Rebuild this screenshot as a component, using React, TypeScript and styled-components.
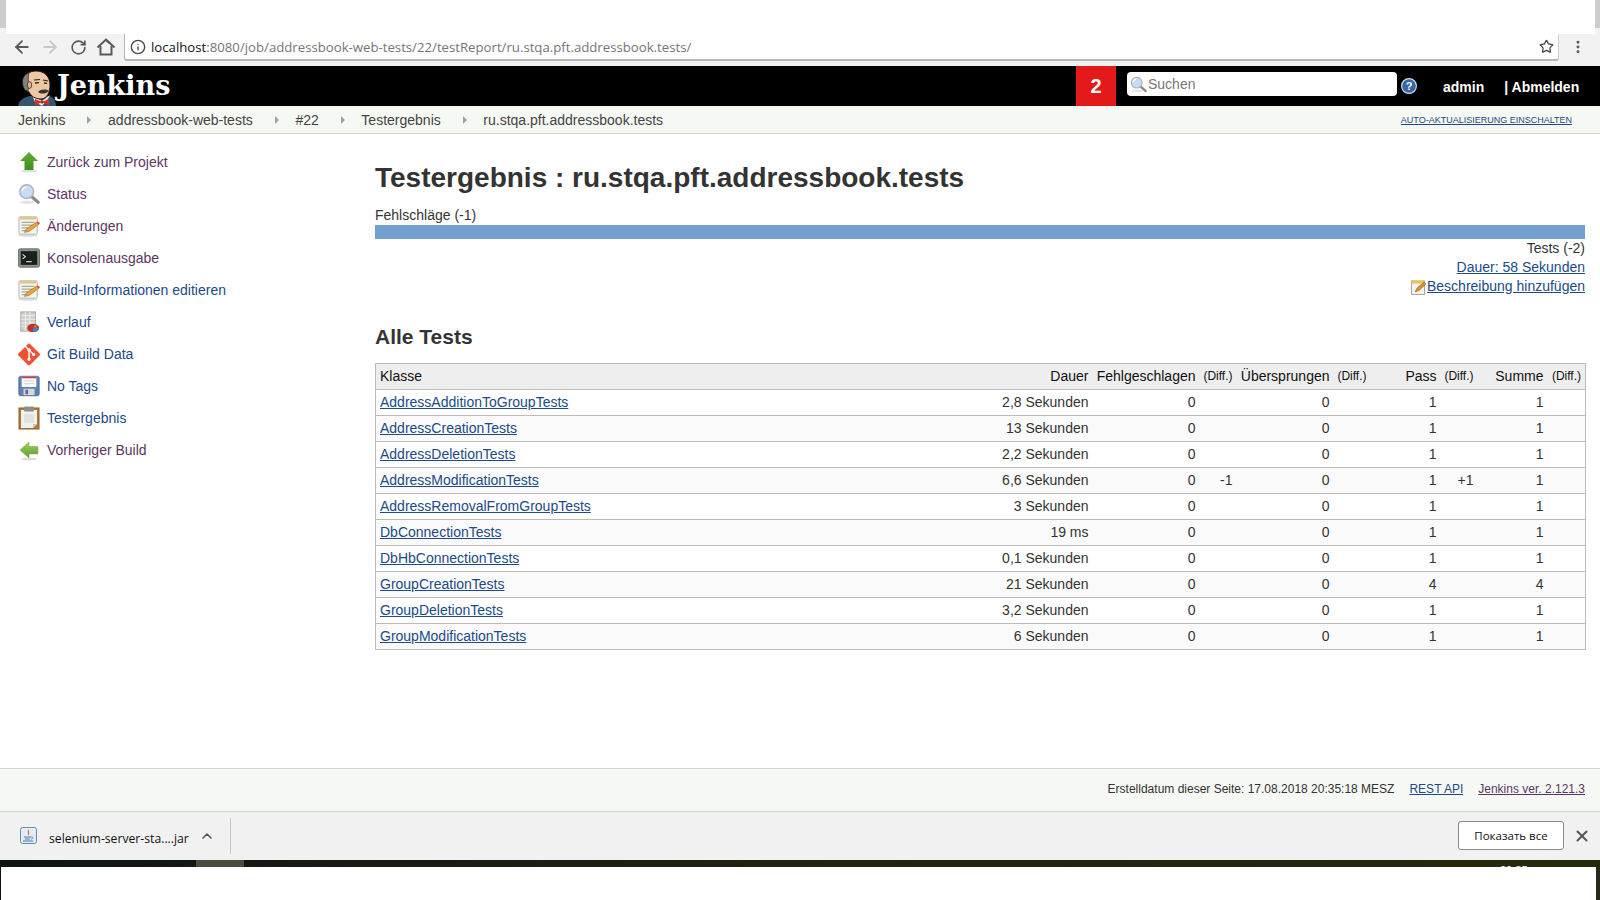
import React from "react";
import styled, { createGlobalStyle } from "styled-components";
import { ArrowLeft, ArrowRight, ChevronUp, Info, MoreVertical, RotateCw, Star, X } from "lucide-react";
import { SiGit } from "react-icons/si";

const GlobalStyle = createGlobalStyle`
  html, body { margin: 0; padding: 0; background: #fff; }
  body { font-family: "Liberation Sans", Arial, sans-serif; font-size: 14px; color: #333; }
  * { box-sizing: border-box; }
`;

const Page = styled.div`
  width: 1600px;
  height: 900px;
  display: flex;
  flex-direction: column;
  overflow: hidden;
`;

const TitleStrip = styled.div`
  height: 34px;
  flex: none;
  display: flex;
  justify-content: space-between;
  background: #fff;
`;

const StripEdge = styled.div<{ $w: number }>`
  width: ${({ $w }) => $w}px;
  background: linear-gradient(#cdcdcd 0, #cdcdcd 28px, #f2f2f2 28px);
`;

const Toolbar = styled.div`
  height: 32px;
  flex: none;
  display: flex;
  align-items: flex-start;
  background: #f2f2f2;
`;

const NavButton = styled.span<{ $off?: boolean }>`
  width: 28px;
  height: 26px;
  flex: none;
  display: flex;
  align-items: center;
  justify-content: center;
  color: ${({ $off }) => ($off ? "#c9c9c9" : "#5a5a5a")};
`;

const NavGroup = styled.div`
  width: 124px;
  flex: none;
  display: flex;
  padding-left: 8px;
`;

const AddressBar = styled.div`
  width: 1435px;
  height: 27px;
  flex: none;
  display: flex;
  align-items: center;
  gap: 5px;
  padding: 0 4px 0 5px;
  background: #fff;
  border-left: 1px solid #b5b5b5;
  border-right: 1px solid #d0d0d0;
  border-bottom: 2px solid #b5b5b5;
  border-radius: 0 0 3px 3px;
  font-family: "Open Sans", sans-serif;
  font-size: 13.2px;
  color: #757575;
`;

const Host = styled.span`
  color: #111;
`;

const Url = styled.span`
  flex: 1;
  white-space: nowrap;
`;

const Menu = styled.span`
  width: 37px;
  height: 26px;
  display: flex;
  align-items: center;
  justify-content: center;
  color: #5a5a5a;
`;

const Header = styled.header`
  height: 40px;
  flex: none;
  display: flex;
  align-items: stretch;
  background: #000;
`;

const Brand = styled.div`
  width: 1076px;
  display: flex;
  align-items: flex-end;
  padding-left: 18px;
  gap: 1px;
`;

const BrandName = styled.span`
  font-family: "DejaVu Serif", "Liberation Serif", serif;
  font-weight: bold;
  font-size: 27px;
  line-height: 36px;
  height: 38px;
  color: #fff;
`;

const Badge = styled.div`
  width: 40px;
  display: flex;
  align-items: center;
  justify-content: center;
  background: #e41a1a;
  color: #fff;
  font-weight: bold;
  font-size: 20px;
`;

const SearchBox = styled.div`
  width: 270px;
  height: 24px;
  margin: 6px 0 0 11px;
  display: flex;
  align-items: center;
  gap: 1px;
  padding-left: 3px;
  background: #fff;
  border-radius: 4px;
  font-size: 14px;
  color: #777;
`;

const HeaderHelp = styled.span`
  margin: 12px 0 0 4px;
  height: 16px;
`;

const HeaderLink = styled.span<{ $left: number }>`
  margin-left: ${({ $left }) => $left}px;
  align-self: center;
  padding-top: 1px;
  color: #fff;
  font-weight: bold;
  font-size: 14px;
`;

const Crumbs = styled.nav`
  height: 28px;
  flex: none;
  display: flex;
  align-items: center;
  padding: 0 28px 0 18px;
  background: #f6f8f3;
  border-bottom: 1px solid #d3d7cf;
  color: #444;
`;

const Crumb = styled.span`
  white-space: nowrap;
`;

const CrumbArrow = styled.span`
  width: 0;
  height: 0;
  margin: 0 16.6px 0 22px;
  border-left: 4px solid #a0a0a0;
  border-top: 4px solid transparent;
  border-bottom: 4px solid transparent;
`;

const AutoRefresh = styled.a`
  margin-left: auto;
  font-size: 9px;
  color: #204a87;
  text-decoration: underline;
`;

const Body = styled.div`
  height: 634px;
  flex: none;
  display: flex;
`;

const Side = styled.aside`
  width: 375px;
  flex: none;
  padding: 12px 0 0 18px;
`;

const SideItem = styled.a<{ $visited?: boolean }>`
  height: 32px;
  display: flex;
  align-items: center;
  gap: 7px;
  color: ${({ $visited }) => ($visited ? "#5c3566" : "#204a87")};
`;

const SideIcon = styled.span`
  width: 22px;
  height: 24px;
  flex: none;
  display: flex;
  align-items: center;
  justify-content: center;
`;

const Main = styled.main`
  width: 1210px;
  flex: none;
`;

const Title = styled.h1`
  margin: 25px 0 0;
  font-size: 28px;
  line-height: 38px;
  font-weight: bold;
  color: #333;
`;

const BarLabel = styled.div`
  margin-top: 9px;
  line-height: 18px;
`;

const Bar = styled.div`
  height: 14px;
  margin-top: 1px;
  background: #729fcf;
`;

const Summary = styled.div`
  display: flex;
  flex-direction: column;
  align-items: flex-end;
  line-height: 19px;
`;

const SummaryLine = styled.div`
  display: flex;
  align-items: center;
`;

const TextLink = styled.a<{ $visited?: boolean }>`
  color: ${({ $visited }) => ($visited ? "#5c3566" : "#204a87")};
  text-decoration: underline;
`;

const SubTitle = styled.h2`
  margin: 27px 0 0;
  font-size: 21px;
  line-height: 28px;
  font-weight: bold;
  color: #333;
`;

const Table = styled.table`
  width: 1210px;
  margin-top: 12px;
  table-layout: fixed;
  border-collapse: collapse;
  border: 1px solid #bbb;
`;

const HeadRow = styled.tr`
  height: 26px;
  background: #eee;
  color: #111;
`;

const Row = styled.tr<{ $odd: boolean }>`
  height: 26px;
  background: ${({ $odd }) => ($odd ? "#fafafa" : "#fff")};
  border-top: 1px solid #bbb;
`;

const Cell = styled.td<{ $right?: boolean }>`
  padding: 0 4px 2px;
  white-space: nowrap;
  font-weight: normal;
  text-align: ${({ $right }) => ($right ? "right" : "left")};
`;

const HeadCell = styled(Cell).attrs({ as: "th" })``;

const DiffHead = styled(HeadCell)`
  font-size: 12px;
  padding-left: 0;
`;

const Footer = styled.footer`
  height: 44px;
  flex: none;
  display: flex;
  align-items: center;
  justify-content: flex-end;
  gap: 15px;
  padding: 0 15px 2px 0;
  background: #f6f8f3;
  border-top: 1px solid #d3d7cf;
  border-bottom: 1px solid #d3d7cf;
  font-size: 12px;
`;

const DownloadBar = styled.div`
  height: 48px;
  flex: none;
  display: flex;
  align-items: center;
  padding: 0 5px 1px 0;
  background: #f1f1f1;
  font-family: "Open Sans", sans-serif;
`;

const DownloadItem = styled.div`
  width: 231px;
  height: 36px;
  flex: none;
  display: flex;
  align-items: center;
  padding-left: 20px;
  border-right: 1px solid #c8c8c8;
  color: #111;
  font-size: 12.2px;
`;

const FileName = styled.span`
  margin: 6px 10px 0 12px;
  white-space: nowrap;
`;

const ShowAll = styled.button`
  width: 106px;
  height: 29px;
  margin-left: auto;
  background: #fff;
  border: 1px solid #8a8a8a;
  border-radius: 3px;
  font-family: "Open Sans", sans-serif;
  font-size: 11.5px;
  color: #111;
`;

const CloseButton = styled.span`
  width: 26px;
  margin-left: 5px;
  display: flex;
  justify-content: center;
  color: #555;
`;

const Desktop = styled.div`
  height: 7px;
  flex: none;
  position: relative;
  overflow: hidden;
  background: linear-gradient(90deg, #0d1514, #1e2210 45%, #272a0b);
`;

const DesktopTab = styled.div`
  position: absolute;
  left: 196px;
  top: 0;
  width: 48px;
  height: 7px;
  background: #4a4d3c;
`;

const DesktopClock = styled.span`
  position: absolute;
  left: 1500px;
  top: 4px;
  color: #fff;
  font-size: 11px;
  line-height: 12px;
`;

const Below = styled.div`
  flex: 1;
  background: #fff;
  border-left: 1px solid #111;
  border-right: 4px solid #2a2a1c;
`;

const HomeIcon = () => (
  <svg width="20" height="20" viewBox="0 0 20 20" fill="none" stroke="currentColor" strokeWidth="2">
    <path d="M1.5 10.5 L10 2.5 L18.5 10.5" strokeLinejoin="miter" />
    <path d="M4.5 9 V17.5 H15.5 V9" />
    <path d="M10 3 L14 6.5" />
  </svg>
);

const ArrowIcon = ({ left, colors }: { left?: boolean; colors: [string, string] }) => (
  <svg width="22" height="22" viewBox="0 0 22 22">
    <defs>
      <linearGradient id={left ? "arrL" : "arrU"} x1="0" y1="0" x2="0" y2="1">
        <stop offset="0" stopColor={colors[0]} />
        <stop offset="1" stopColor={colors[1]} />
      </linearGradient>
    </defs>
    <ellipse cx="11" cy="20" rx="8" ry="1.5" fill="#ddd" />
    {left ? (
      <path d="M2 11 L11 3 V7.5 H20 V15 H11 V19 Z" fill="url(#arrL)" stroke="#7aa84a" strokeWidth=".5" />
    ) : (
      <path d="M11 1 L20 10 H15.5 V19 H6.5 V10 H2 Z" fill="url(#arrU)" />
    )}
  </svg>
);

const LensIcon = ({ size = 24 }: { size?: number }) => (
  <svg width={size} height={size} viewBox="0 0 24 24">
    <ellipse cx="10" cy="21" rx="8" ry="2" fill="#e6e6e6" />
    <path d="M15 15 L22 21" stroke="#8a8a8a" strokeWidth="3.4" strokeLinecap="round" />
    <circle cx="9.5" cy="9.5" r="7.5" fill="#c7dcf3" stroke="#a9b4bf" strokeWidth="1.6" />
    <path d="M4.5 9 A5 5 0 0 1 9 4.5" stroke="#fff" strokeWidth="1.6" fill="none" />
  </svg>
);

const NoteIcon = () => (
  <svg width="24" height="24" viewBox="0 0 24 24">
    <ellipse cx="11" cy="22.5" rx="10" ry="1.2" fill="#ddd" />
    <rect x="1" y="2" width="20" height="19" rx="1" fill="#f3f3ee" stroke="#b5b5ad" />
    <rect x="2" y="2" width="18" height="3" fill="#d9c98b" />
    <path d="M4 8 H18 M4 11 H16 M4 14 H11 M4 17 H9" stroke="#a9a9a5" strokeWidth="1.2" />
    <path d="M7 19 L9 15 L20 8 L23 10 L12 18 Z" fill="#e8a33b" stroke="#a06a1d" strokeWidth=".6" />
    <path d="M20 8 L23 10 L24 8.6 L21.5 7 Z" fill="#d9403a" />
  </svg>
);

const ConsoleIcon = () => (
  <svg width="24" height="24" viewBox="0 0 24 24">
    <rect x="0.5" y="2" width="23" height="20" rx="2" fill="#8e928a" stroke="#666" />
    <rect x="3" y="4.5" width="18" height="15" fill="#18221c" />
    <path d="M5 8 L8 10.5 L5 13" stroke="#dfe8df" strokeWidth="1.2" fill="none" />
    <path d="M9 16 H15" stroke="#dfe8df" strokeWidth="1.2" />
  </svg>
);

const HistoryIcon = () => (
  <svg width="24" height="24" viewBox="0 0 24 24">
    <rect x="3" y="1" width="16" height="21" fill="#cfcfca" stroke="#a5a5a0" />
    <path d="M3 5 H19 M3 9 H19 M3 13 H19 M3 17 H19 M8 1 V22 M13 1 V22" stroke="#efefec" strokeWidth="1" />
    <ellipse cx="16.5" cy="18.5" rx="6.5" ry="4.5" fill="#c62d2a" />
    <path d="M16.5 18.5 L23 18.5 A6.5 4.5 0 0 1 16 23 Z" fill="#4b7fb5" />
    <path d="M16.5 18 L19.5 14.5 L21 18 Z" fill="#7aa84a" />
  </svg>
);

const FloppyIcon = () => (
  <svg width="24" height="24" viewBox="0 0 24 24">
    <rect x="0" y="0" width="24" height="24" fill="#f2f2f2" />
    <rect x="1" y="1.5" width="22" height="21" rx="2" fill="#5f82b4" stroke="#456a9c" />
    <rect x="4" y="2" width="16" height="11" fill="#fff" />
    <rect x="4" y="2" width="16" height="1.6" fill="#d63a35" />
    <path d="M6 6.5 H18 M6 9.5 H18" stroke="#c9c9c9" />
    <rect x="6" y="15" width="12" height="7" fill="#d9d9d9" />
    <rect x="8" y="16" width="3" height="5" fill="#5a6f8f" />
  </svg>
);

const ClipboardIcon = () => (
  <svg width="22" height="24" viewBox="0 0 22 24">
    <rect x="1" y="2" width="20" height="21" fill="#b17a35" stroke="#8c5f26" />
    <path d="M3 4 H19 V18 L15 22 H3 Z" fill="#f1f1ee" />
    <path d="M15 22 L19 18 H15 Z" fill="#c8c8c4" />
    <path d="M6 8 H16 V17 H6 Z" fill="#e2e2de" />
    <rect x="6" y="0.5" width="10" height="5" rx="1" fill="#8e8e8a" />
  </svg>
);

const SmallNote = () => (
  <svg width="16" height="16" viewBox="0 0 16 16">
    <rect x="0.5" y="2" width="13" height="13.5" fill="#f4f4ee" stroke="#a8a8a0" />
    <rect x="1" y="1.5" width="12" height="3" fill="#e2c65a" />
    <path d="M4 13 L6 9 L13 3 L15 5 L8 11.5 Z" fill="#d98f2b" stroke="#8d5a19" strokeWidth=".5" />
  </svg>
);

const JavaFile = () => (
  <svg width="17" height="17" viewBox="0 0 17 17">
    <rect x="0.5" y="0.5" width="16" height="16" rx="2" fill="#e3ecf6" stroke="#6f8aa6" />
    <path d="M9 3 C7 5 10 6 8 8" stroke="#e0702a" strokeWidth="1.2" fill="none" />
    <path d="M4 10 H11 M5 12 H10 M3 14 H13" stroke="#4d7ca8" strokeWidth="1" />
    <path d="M11 10 C13.5 9.5 13.5 12 11 12" stroke="#4d7ca8" strokeWidth=".8" fill="none" />
  </svg>
);

const HelpIcon = () => (
  <svg width="16" height="16" viewBox="0 0 16 16">
    <circle cx="8" cy="8" r="7.4" fill="#3566a8" stroke="#cfd9e8" strokeWidth="1.2" />
    <text x="8" y="12" textAnchor="middle" fontSize="11" fontWeight="bold" fontFamily="Liberation Sans" fill="#fff">?</text>
  </svg>
);

const Butler = () => (
  <svg width="38" height="38" viewBox="0 0 38 38">
    <path d="M0 38 C1 32 6 29 12 28 L32 28 C36 30 38 34 38 38 Z" fill="#33566f" />
    <path d="M14 27 L24 33 L32 27 L30 31 L24 38 L17 34 Z" fill="#ece9e1" />
    <path d="M6 14 C6 6 12 3 18 3 C27 3 32 9 32 17 C32 24 29 31 23 31 C17 31 13 28 11 24 C8 23 6 19 6 14 Z" fill="#eec7a4" stroke="#231c18" strokeWidth="1" />
    <path d="M5 18 C3 10 7 6 11 5 C10 9 10 13 11 17 L10 23 C7 23 6 21 5 18 Z" fill="#7f7f7b" stroke="#231c18" strokeWidth=".6" />
    <ellipse cx="11.5" cy="17" rx="2.2" ry="3.4" fill="#e3b28e" stroke="#231c18" strokeWidth=".7" />
    <path d="M16 12 L22 11.5 M25 12 L30 13" stroke="#2c2420" strokeWidth="1.2" />
    <path d="M17 15 L21 14.6 M26 15 L29 15.4" stroke="#2c2420" strokeWidth="1.4" />
    <path d="M20 24 C23 21 28 21 31 23 C28 26 23 26.5 20 24 Z" fill="#3a3430" />
    <path d="M17 31 L24 34 L17 37.5 Z M31 31 L24 34 L31 37.5 Z" fill="#dc2a2d" />
    <circle cx="24" cy="34" r="1.5" fill="#b21b20" />
  </svg>
);

type NavEntry = { label: string; icon: React.ReactNode; visited?: boolean };

const navEntries: NavEntry[] = [
  { label: "Zurück zum Projekt", icon: <ArrowIcon colors={["#5fae2f", "#3f8f1f"]} />, visited: true },
  { label: "Status", icon: <LensIcon />, visited: true },
  { label: "Änderungen", icon: <NoteIcon />, visited: true },
  { label: "Konsolenausgabe", icon: <ConsoleIcon />, visited: true },
  { label: "Build-Informationen editieren", icon: <NoteIcon /> },
  { label: "Verlauf", icon: <HistoryIcon /> },
  { label: "Git Build Data", icon: <SiGit size={27} color="#f05033" /> },
  { label: "No Tags", icon: <FloppyIcon /> },
  { label: "Testergebnis", icon: <ClipboardIcon /> },
  { label: "Vorheriger Build", icon: <ArrowIcon left colors={["#9ccc5f", "#5f9f2f"]} />, visited: true },
];

type TestRow = {
  name: string;
  duration: string;
  pass: number;
  failDiff?: string;
  passDiff?: string;
};

const testRows: TestRow[] = [
  { name: "AddressAdditionToGroupTests", duration: "2,8 Sekunden", pass: 1 },
  { name: "AddressCreationTests", duration: "13 Sekunden", pass: 1 },
  { name: "AddressDeletionTests", duration: "2,2 Sekunden", pass: 1 },
  { name: "AddressModificationTests", duration: "6,6 Sekunden", pass: 1, failDiff: "-1", passDiff: "+1" },
  { name: "AddressRemovalFromGroupTests", duration: "3 Sekunden", pass: 1 },
  { name: "DbConnectionTests", duration: "19 ms", pass: 1 },
  { name: "DbHbConnectionTests", duration: "0,1 Sekunden", pass: 1 },
  { name: "GroupCreationTests", duration: "21 Sekunden", pass: 4 },
  { name: "GroupDeletionTests", duration: "3,2 Sekunden", pass: 1 },
  { name: "GroupModificationTests", duration: "6 Sekunden", pass: 1 },
];

const columnWidths = [605, 112, 107, 37, 97, 37, 70, 37, 70, 38];
const crumbs = ["Jenkins", "addressbook-web-tests", "#22", "Testergebnis", "ru.stqa.pft.addressbook.tests"];

export default function App() {
  return (
    <Page>
      <GlobalStyle />
      <TitleStrip>
        <StripEdge $w={6} />
        <StripEdge $w={5} />
      </TitleStrip>
      <Toolbar>
        <NavGroup>
          <NavButton><ArrowLeft size={20} strokeWidth={2.2} /></NavButton>
          <NavButton $off><ArrowRight size={20} strokeWidth={2.2} /></NavButton>
          <NavButton><RotateCw size={17} strokeWidth={2.4} /></NavButton>
          <NavButton><HomeIcon /></NavButton>
        </NavGroup>
        <AddressBar>
          <Info size={16} color="#444" strokeWidth={2} />
          <Url>
            <Host>localhost</Host>:8080/job/addressbook-web-tests/22/testReport/ru.stqa.pft.addressbook.tests/
          </Url>
          <Star size={15} color="#444" strokeWidth={2} />
        </AddressBar>
        <Menu><MoreVertical size={16} strokeWidth={2.4} /></Menu>
      </Toolbar>
      <Header>
        <Brand>
          <Butler />
          <BrandName>Jenkins</BrandName>
        </Brand>
        <Badge>2</Badge>
        <SearchBox>
          <LensIcon size={17} />
          Suchen
        </SearchBox>
        <HeaderHelp><HelpIcon /></HeaderHelp>
        <HeaderLink $left={26}>admin</HeaderLink>
        <HeaderLink $left={20}>| Abmelden</HeaderLink>
      </Header>
      <Crumbs>
        {crumbs.map((crumb, i) => (
          <React.Fragment key={crumb}>
            <Crumb>{crumb}</Crumb>
            {i < crumbs.length - 1 && <CrumbArrow />}
          </React.Fragment>
        ))}
        <AutoRefresh>AUTO-AKTUALISIERUNG EINSCHALTEN</AutoRefresh>
      </Crumbs>
      <Body>
        <Side>
          {navEntries.map((entry) => (
            <SideItem key={entry.label} $visited={entry.visited}>
              <SideIcon>{entry.icon}</SideIcon>
              {entry.label}
            </SideItem>
          ))}
        </Side>
        <Main>
          <Title>Testergebnis : ru.stqa.pft.addressbook.tests</Title>
          <BarLabel>Fehlschläge (-1)</BarLabel>
          <Bar />
          <Summary>
            <SummaryLine>Tests (-2)</SummaryLine>
            <SummaryLine><TextLink>Dauer: 58 Sekunden</TextLink></SummaryLine>
            <SummaryLine><SmallNote /><TextLink>Beschreibung hinzufügen</TextLink></SummaryLine>
          </Summary>
          <SubTitle>Alle Tests</SubTitle>
          <Table>
            <colgroup>
              {columnWidths.map((width, i) => (
                <col key={i} width={width} />
              ))}
            </colgroup>
            <thead>
              <HeadRow>
                <HeadCell>Klasse</HeadCell>
                <HeadCell $right>Dauer</HeadCell>
                <HeadCell $right>Fehlgeschlagen</HeadCell>
                <DiffHead $right>(Diff.)</DiffHead>
                <HeadCell $right>Übersprungen</HeadCell>
                <DiffHead $right>(Diff.)</DiffHead>
                <HeadCell $right>Pass</HeadCell>
                <DiffHead $right>(Diff.)</DiffHead>
                <HeadCell $right>Summe</HeadCell>
                <DiffHead $right>(Diff.)</DiffHead>
              </HeadRow>
            </thead>
            <tbody>
              {testRows.map((row, i) => (
                <Row key={row.name} $odd={i % 2 === 1}>
                  <Cell><TextLink>{row.name}</TextLink></Cell>
                  <Cell $right>{row.duration}</Cell>
                  <Cell $right>0</Cell>
                  <Cell $right>{row.failDiff}</Cell>
                  <Cell $right>0</Cell>
                  <Cell $right />
                  <Cell $right>{row.pass}</Cell>
                  <Cell $right>{row.passDiff}</Cell>
                  <Cell $right>{row.pass}</Cell>
                  <Cell $right />
                </Row>
              ))}
            </tbody>
          </Table>
        </Main>
      </Body>
      <Footer>
        <span>Erstelldatum dieser Seite: 17.08.2018 20:35:18 MESZ</span>
        <TextLink>REST API</TextLink>
        <TextLink $visited>Jenkins ver. 2.121.3</TextLink>
      </Footer>
      <DownloadBar>
        <DownloadItem>
          <JavaFile />
          <FileName>selenium-server-sta....jar</FileName>
          <ChevronUp size={16} color="#555" strokeWidth={2.4} />
        </DownloadItem>
        <ShowAll>Показать все</ShowAll>
        <CloseButton><X size={18} strokeWidth={2.6} /></CloseButton>
      </DownloadBar>
      <Desktop>
        <DesktopTab />
        <DesktopClock>20:35</DesktopClock>
      </Desktop>
      <Below />
    </Page>
  );
}
